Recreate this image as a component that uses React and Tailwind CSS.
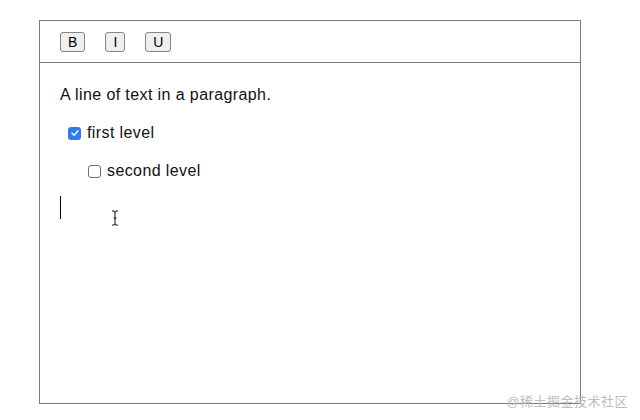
import React from 'react';

const ToolButton = ({ label }) => (
  <button className="h-[20px] min-w-[20px] px-[7px] rounded-[3px] border border-[#858585] bg-[#efefef] text-[14px] leading-none text-black">
    {label}
  </button>
);

const Check = ({ checked }) =>
  checked ? (
    <span className="w-[13px] h-[13px] rounded-[3px] bg-[#2f7bf0] flex items-center justify-center">
      <svg viewBox="0 0 12 12" className="w-[10px] h-[10px]">
        <path d="M2.5 6.2 L5 8.6 L9.6 3.4" fill="none" stroke="white" strokeWidth="1.8" strokeLinecap="round" strokeLinejoin="round" />
      </svg>
    </span>
  ) : (
    <span className="w-[13px] h-[13px] rounded-[3px] border border-[#6f6f6f] bg-white" />
  );

const App = () => {
  return (
    <div className="relative w-[640px] h-[420px] bg-white" style={{ fontFamily: '"Liberation Sans", Arial, "Noto Sans CJK SC", sans-serif' }}>
      <div className="pt-[20px] pl-[39px]">
        <div className="w-[542px] h-[384px] border border-[#7a7a7a] flex flex-col">
          {/* Toolbar */}
          <div className="h-[42px] border-b border-[#7a7a7a] flex items-center pl-[20px] gap-[20px]">
            <ToolButton label="B" />
            <ToolButton label="I" />
            <ToolButton label="U" />
          </div>

          {/* Editor */}
          <div className="px-[20px] pt-[20px] text-[16px] text-[#111] tracking-[0.4px]">
            <p className="h-[24px] leading-[24px]">A line of text in a paragraph.</p>
            <div className="mt-[14px] flex flex-col gap-[14px]">
              <div className="h-[24px] flex items-center pl-[8px] gap-[6px]">
                <Check checked />
                <span>first level</span>
              </div>
              <div className="h-[24px] flex items-center pl-[28px] gap-[6px]">
                <Check />
                <span>second level</span>
              </div>
            </div>
            <div className="mt-[13px] w-px h-[23px] bg-black" />
          </div>
        </div>
      </div>

      {/* mouse cursor */}
      <svg className="absolute left-[111px] top-[210px]" width="8" height="16" viewBox="0 0 8 16">
        <path d="M1 1 H3 Q4 1 4 2.5 V13.5 Q4 15 3 15 H1 M7 1 H5 Q4 1 4 2.5 M4 13.5 Q4 15 5 15 H7 M2.5 8 H5.5" fill="none" stroke="#111" strokeWidth="1" />
      </svg>

      {/* watermark */}
      <div className="absolute right-[12px] top-[392px] text-[13px] text-[#bdbdbd] tracking-[0.5px]">
        @稀土掘金技术社区
      </div>
    </div>
  );
};

export default App;
